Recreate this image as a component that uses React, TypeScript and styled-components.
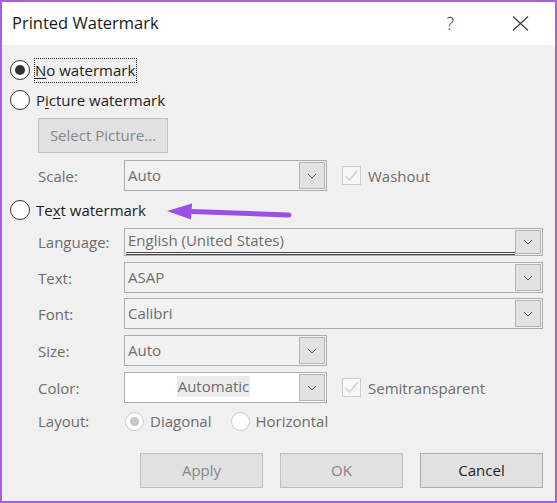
import React from 'react'
import styled, { createGlobalStyle } from 'styled-components'

const GlobalStyle = createGlobalStyle`
    html, body {
        margin: 0;
        padding: 0;
        background: #f0f0f0;
    }
    * {
        box-sizing: border-box;
    }
`

const Window = styled.div`
    width: 557px;
    height: 503px;
    border: 2px solid #a363d6;
    background: #f0f0f0;
    font-family: "Open Sans", "Noto Sans", sans-serif;
    font-size: 15px;
    color: #1e1e1e;
    display: flex;
    flex-direction: column;
    position: relative;
    overflow: hidden;
`

const TitleBar = styled.div`
    height: 43px;
    background: #ffffff;
    display: flex;
    align-items: center;
    padding-left: 10px;
    padding-right: 26px;
`

const Title = styled.div`
    flex: 1;
    font-size: 16.5px;
    color: #1a1a1a;
    padding-bottom: 2px;
`

const HelpGlyph = styled.span`
    font-size: 18px;
    font-weight: 300;
    color: #333;
    margin-right: 58px;
    padding-bottom: 2px;
`

const Body = styled.div`
    flex: 1;
    display: flex;
    flex-direction: column;
    gap: 6px;
    padding: 13px 12px 0 8px;
`

const Line = styled.div<{ $top?: number }>`
    display: flex;
    align-items: center;
    margin-top: ${p => p.$top || 0}px;
`

const RadioRow = styled(Line)`
    height: 24px;
`

const RadioCircle = styled.span<{ $checked?: boolean, $disabled?: boolean, $size?: number, $gap?: number }>`
    width: ${p => p.$size || 20}px;
    height: ${p => p.$size || 20}px;
    border-radius: 50%;
    border: 1px solid ${p => p.$disabled ? '#cccccc' : '#333333'};
    background: #ffffff;
    display: flex;
    align-items: center;
    justify-content: center;
    flex-shrink: 0;
    margin-right: 6px;
    margin-left: ${p => p.$gap || 0}px;

    &::after {
        content: '';
        display: ${p => p.$checked ? 'block' : 'none'};
        width: ${p => p.$disabled ? 9 : 10}px;
        height: ${p => p.$disabled ? 9 : 10}px;
        border-radius: 50%;
        background: ${p => p.$disabled ? '#c6c6c6' : '#333333'};
    }
`

const RadioLabel = styled.span<{ $focused?: boolean, $disabled?: boolean }>`
    color: ${p => p.$disabled ? '#6d6d6d' : '#1e1e1e'};
    outline: ${p => p.$focused ? '1px dotted #222' : 'none'};
    padding: ${p => p.$focused ? '1px 1px 2px 0' : '0'};
    margin-left: ${p => p.$focused ? '-1px' : '0'};

    u {
        text-decoration: underline;
        text-underline-offset: 2px;
    }
`

const Indent = styled.div`
    display: flex;
    flex-direction: column;
    gap: 6px;
    margin-left: 28px;
`

const FieldRow = styled(Line)<{ $h?: number }>`
    height: ${p => p.$h || 31}px;
`

const FieldLabel = styled.span`
    width: 86px;
    color: #6d6d6d;
    flex-shrink: 0;
`

const PushButton = styled.div<{ $w: number, $enabled?: boolean }>`
    width: ${p => p.$w}px;
    height: 35px;
    background: #e1e1e1;
    border: 1px solid ${p => p.$enabled ? '#adadad' : '#bfbfbf'};
    color: ${p => p.$enabled ? '#1e1e1e' : '#878787'};
    display: flex;
    align-items: center;
    justify-content: center;
    padding-bottom: 2px;
`

const Combo = styled.div<{ $w: number, $white?: boolean }>`
    width: ${p => p.$w}px;
    height: 100%;
    border: 1px solid #adadad;
    background: ${p => p.$white ? '#ffffff' : '#f2f2f2'};
    display: flex;
    align-items: stretch;
    padding: 1px;
    color: #6d6d6d;
`

const ComboText = styled.div<{ $center?: boolean, $underline?: boolean }>`
    flex: 1;
    display: flex;
    align-items: center;
    justify-content: ${p => p.$center ? 'center' : 'flex-start'};
    padding-left: 2px;
    padding-bottom: 2px;
    border-bottom: ${p => p.$underline ? '3px double #4a4a4a' : 'none'};
    margin-bottom: ${p => p.$underline ? '-1px' : '0'};
`

const Highlight = styled.span`
    background: #ececec;
    padding: 0 1px 1px;
`

const DropButton = styled.div`
    width: 26px;
    background: #e2e2e2;
    border: 1px solid #b4b4b4;
    display: flex;
    align-items: center;
    justify-content: center;
`

const CheckBox = styled.span`
    width: 19px;
    height: 19px;
    border: 1px solid #cccccc;
    background: #f7f7f7;
    margin-left: 15px;
    margin-right: 7px;
    display: flex;
    align-items: center;
    justify-content: center;
`

const CheckText = styled.span`
    color: #6d6d6d;
`

const ButtonBar = styled.div`
    display: flex;
    justify-content: flex-end;
    gap: 17px;
    margin-top: 14px;
`

const Pointer = styled.svg`
    position: absolute;
    left: 160px;
    top: 198px;
`

const Chevron = () => (
    <svg width="10" height="6" viewBox="0 0 10 6">
        <path d="M1 1 L5 5 L9 1" fill="none" stroke="#555" strokeWidth="1" />
    </svg>
)

const Check = () => (
    <svg width="15" height="13" viewBox="0 0 15 13">
        <path d="M1.5 7 L5.5 11 L13.5 1.5" fill="none" stroke="#cfcfcf" strokeWidth="1.4" />
    </svg>
)

interface IComboProps {
    width: number,
    value: string,
    white?: boolean,
    center?: boolean,
    underline?: boolean,
}

const ComboBox = ({ width, value, white, center, underline }: IComboProps) => (
    <Combo $w={width} $white={white}>
        <ComboText $center={center} $underline={underline}>
            {center ? <Highlight>{value}</Highlight> : value}
        </ComboText>
        <DropButton><Chevron /></DropButton>
    </Combo>
)

const App = () => {
    return (
        <>
            <GlobalStyle />
            <Window>
                <TitleBar>
                    <Title>Printed Watermark</Title>
                    <HelpGlyph>?</HelpGlyph>
                    <svg width="17" height="15" viewBox="0 0 17 15">
                        <path d="M1 0.5 L16 14.5 M16 0.5 L1 14.5" stroke="#333" strokeWidth="1.1" />
                    </svg>
                </TitleBar>
                <Body>
                    <RadioRow>
                        <RadioCircle $checked />
                        <RadioLabel $focused><u>N</u>o watermark</RadioLabel>
                    </RadioRow>
                    <RadioRow>
                        <RadioCircle />
                        <RadioLabel>P<u>i</u>cture watermark</RadioLabel>
                    </RadioRow>
                    <Indent>
                        <PushButton $w={130}>Select Picture...</PushButton>
                        <FieldRow $top={1}>
                            <FieldLabel>Scale:</FieldLabel>
                            <ComboBox width={203} value="Auto" />
                            <CheckBox><Check /></CheckBox>
                            <CheckText>Washout</CheckText>
                        </FieldRow>
                    </Indent>
                    <RadioRow $top={1}>
                        <RadioCircle />
                        <RadioLabel>Te<u>x</u>t watermark</RadioLabel>
                    </RadioRow>
                    <Indent>
                        <FieldRow $h={28}>
                            <FieldLabel>Language:</FieldLabel>
                            <ComboBox width={420} value="English (United States)" underline />
                        </FieldRow>
                        <FieldRow>
                            <FieldLabel>Text:</FieldLabel>
                            <ComboBox width={420} value="ASAP" />
                        </FieldRow>
                        <FieldRow $top={-1}>
                            <FieldLabel>Font:</FieldLabel>
                            <ComboBox width={420} value="Calibri" />
                        </FieldRow>
                        <FieldRow>
                            <FieldLabel>Size:</FieldLabel>
                            <ComboBox width={203} value="Auto" />
                        </FieldRow>
                        <FieldRow>
                            <FieldLabel>Color:</FieldLabel>
                            <ComboBox width={203} value="Automatic" white center />
                            <CheckBox><Check /></CheckBox>
                            <CheckText>Semitransparent</CheckText>
                        </FieldRow>
                        <FieldRow $h={24}>
                            <FieldLabel>Layout:</FieldLabel>
                            <RadioCircle $checked $disabled $size={19} $gap={1} />
                            <CheckText>Diagonal</CheckText>
                            <RadioCircle $disabled $size={19} $gap={19} />
                            <CheckText>Horizontal</CheckText>
                        </FieldRow>
                    </Indent>
                    <ButtonBar>
                        <PushButton $w={123}>Apply</PushButton>
                        <PushButton $w={123}>OK</PushButton>
                        <PushButton $w={123} $enabled>Cancel</PushButton>
                    </ButtonBar>
                </Body>
                <Pointer width="132" height="24" viewBox="0 0 132 24">
                    <path d="M30 11.5 L127 15" stroke="#9b4fe6" strokeWidth="5" strokeLinecap="round" />
                    <path d="M5 11 L30 3.5 L29 19.5 Z" fill="#9b4fe6" />
                </Pointer>
            </Window>
        </>
    )
}

export default App
